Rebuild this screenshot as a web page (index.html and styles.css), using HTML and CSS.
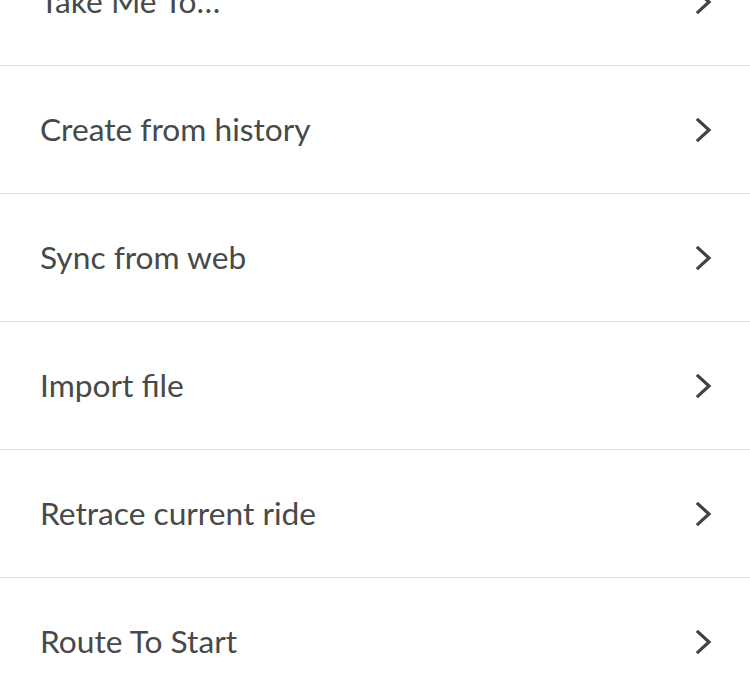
FILE: index.html
```html
<!DOCTYPE html>
<html>
<head>
<meta charset="utf-8">
<link rel="stylesheet" href="styles.css">
</head>
<body>
<ul class="menu">
  <li class="row"><span class="label">Take Me To…</span><svg class="chev" viewBox="0 0 16 24"><path d="M2 2 L13 12 L2 22"/></svg></li>
  <li class="row"><span class="label">Create from history</span><svg class="chev" viewBox="0 0 16 24"><path d="M2 2 L13 12 L2 22"/></svg></li>
  <li class="row"><span class="label">Sync from web</span><svg class="chev" viewBox="0 0 16 24"><path d="M2 2 L13 12 L2 22"/></svg></li>
  <li class="row"><span class="label">Import file</span><svg class="chev" viewBox="0 0 16 24"><path d="M2 2 L13 12 L2 22"/></svg></li>
  <li class="row"><span class="label">Retrace current ride</span><svg class="chev" viewBox="0 0 16 24"><path d="M2 2 L13 12 L2 22"/></svg></li>
  <li class="row"><span class="label">Route To Start</span><svg class="chev" viewBox="0 0 16 24"><path d="M2 2 L13 12 L2 22"/></svg></li>
</ul>
</body>
</html>
```
FILE: styles.css
```css
html, body {
  margin: 0;
  padding: 0;
  background: #ffffff;
  overflow: hidden;
}
.menu {
  list-style: none;
  margin: -62px 0 0 0;
  padding: 0;
  font-family: "Lato", "Noto Sans", sans-serif;
}
.row {
  height: 127px;
  display: flex;
  align-items: center;
  justify-content: space-between;
  padding: 0 38px 0 40px;
  border-bottom: 1px solid #e2e2e2;
}
.label {
  font-size: 31.7px;
  color: #464a4a;
  line-height: 1;
}
.chev {
  width: 16px;
  height: 24px;
  fill: none;
  stroke: #3f4343;
  stroke-width: 3.2;
  stroke-linecap: square;
  stroke-linejoin: miter;
}
```
